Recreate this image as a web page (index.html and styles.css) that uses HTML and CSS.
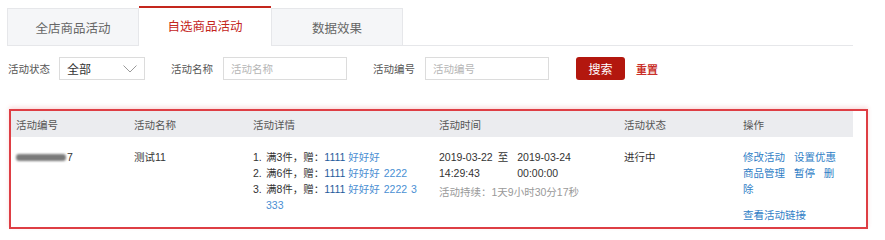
FILE: index.html
```html
<!DOCTYPE html>
<html lang="zh-CN">
<head>
<meta charset="utf-8">
<link rel="stylesheet" href="styles.css">
</head>
<body>
<div class="page">
  <div class="tabs">
    <div class="tab">全店商品活动</div>
    <div class="tab active">自选商品活动</div>
    <div class="tab">数据效果</div>
  </div>
  <div class="filters">
    <span class="flabel first">活动状态</span>
    <div class="select"><span class="sel-text">全部</span>
      <svg class="chev" width="14" height="8" viewBox="0 0 14 8"><path d="M0.5 0.5 L7 7 L13.5 0.5" fill="none" stroke="#9a9a9a" stroke-width="1"/></svg>
    </div>
    <span class="flabel">活动名称</span>
    <div class="input">活动名称</div>
    <span class="flabel">活动编号</span>
    <div class="input">活动编号</div>
    <button class="btn">搜索</button>
    <a class="reset">重置</a>
  </div>
  <div class="highlight">
    <div class="table">
      <div class="thead">
        <div class="th">活动编号</div>
        <div class="th">活动名称</div>
        <div class="th">活动详情</div>
        <div class="th">活动时间</div>
        <div class="th">活动状态</div>
        <div class="th">操作</div>
      </div>
      <div class="trow">
        <div class="td"><span class="blur"></span>7</div>
        <div class="td">测试11</div>
        <div class="td details">
          <div class="item"><span class="num">1.</span><span class="txt">满3件，赠：<span class="b1">1111</span> <span class="b2">好好好</span></span></div>
          <div class="item"><span class="num">2.</span><span class="txt">满6件，赠：<span class="b1">1111</span> <span class="b2">好好好 2222</span></span></div>
          <div class="item"><span class="num">3.</span><span class="txt">满8件，赠：<span class="b1">1111</span> <span class="b2">好好好 2222 3333</span></span></div>
        </div>
        <div class="td time">
          <div class="range">
            <div class="tblock"><div>2019-03-22</div><div>14:29:43</div></div>
            <div class="to">至</div>
            <div class="tblock"><div>2019-03-24</div><div>00:00:00</div></div>
          </div>
          <div class="dur">活动持续：1天9小时30分17秒</div>
        </div>
        <div class="td">进行中</div>
        <div class="td ops">
          <div class="oplinks"><a>修改活动</a> <a>设置优惠</a> <a>商品管理</a> <a>暂停</a> <a>删除</a></div>
          <div class="oplink2"><a>查看活动链接</a></div>
        </div>
      </div>
    </div>
  </div>
</div>
</body>
</html>
```

FILE: styles.css
```css
* { box-sizing: border-box; }
html, body { margin: 0; padding: 0; background: #fff; }
body {
  font-family: "Liberation Sans", "Noto Sans CJK SC", sans-serif;
  color: #333;
  width: 885px;
  height: 240px;
  overflow: hidden;
}
.page { padding-top: 6px; }

.tabs {
  display: flex;
  align-items: flex-end;
  margin-left: 7px;
  width: 846px;
  height: 40px;
  border-bottom: 1px solid #e6e7ea;
}
.tab {
  width: 132px;
  height: 38px;
  margin-bottom: -1px;
  background: #f5f6f8;
  border: 1px solid #e6e7ea;
  color: #666;
  font-size: 12.5px;
  display: flex;
  align-items: center;
  justify-content: center;
}
.tab + .tab { border-left: none; }
.tab.active {
  height: 40px;
  background: #fff;
  border: none;
  border-top: 2px solid #c4261d;
  border-bottom: 1px solid #fff;
  color: #c4261d;
  padding-bottom: 2px;
}
.tab.active + .tab { border-left: 1px solid #e6e7ea; }

.filters {
  display: flex;
  align-items: center;
  margin-top: 11px;
  height: 23px;
  padding-left: 8px;
  font-size: 10.5px;
}
.flabel {
  width: 52px;
  margin-left: 26px;
  color: #555;
  white-space: nowrap;
}
.flabel.first { margin-left: 0; width: 51px; }
.select {
  width: 86px;
  height: 23px;
  border: 1px solid #dcdcdc;
  display: flex;
  align-items: center;
  justify-content: space-between;
  padding: 0 7px;
}
.sel-text { font-size: 12px; color: #333; }
.chev { display: block; }
.input {
  width: 124px;
  height: 23px;
  border: 1px solid #dcdcdc;
  color: #b5b5b5;
  padding-left: 7px;
  display: flex;
  align-items: center;
  font-size: 10.5px;
}
.btn {
  margin-left: 27px;
  width: 49px;
  height: 23px;
  border: none;
  border-radius: 3px;
  background: #b3170e;
  color: #fff;
  font-family: inherit;
  font-size: 12px;
  padding: 0;
}
.reset {
  margin-left: 11px;
  color: #c9302a;
  font-size: 11px;
  font-weight: bold;
}

.highlight {
  margin-top: 29px;
  margin-left: 9px;
  width: 859px;
  border: 2px solid #de3e44;
  padding-right: 13px;
  box-shadow: 0 -2px 4px rgba(222, 62, 68, 0.18);
}
.table { width: 842px; font-size: 10.5px; }
.thead, .trow {
  display: grid;
  grid-template-columns: 118px 119px 186px 185px 119px 115px;
}
.thead { background: #ebecef; height: 26px; }
.th {
  padding-left: 5px;
  display: flex;
  align-items: center;
  color: #555;
}
.trow { padding: 12px 0 4px; line-height: 16px; }
.td { padding-left: 5px; }
.blur {
  display: inline-block;
  width: 50px;
  height: 7px;
  background: #7a7a7a;
  border-radius: 3px;
  filter: blur(0.9px);
  margin-right: 1px;
  vertical-align: 0;
}
.details { padding-right: 15px; }
.item { display: flex; }
.num { width: 13px; flex: none; }
.txt { word-break: break-all; }
.b1 { color: #1f5c9c; }
.b2 { color: #4a8fd3; word-spacing: 1px; }
.range { display: flex; }
.to { margin: 0 9px 0 5px; }
.dur { color: #999; margin-top: 3px; }
.ops { padding-right: 12px; }
.oplinks { word-spacing: 6px; }
.oplinks a { color: #2f7ec6; }
.oplink2 { margin-top: 10px; }
.oplink2 a { color: #2f7ec6; }
```
